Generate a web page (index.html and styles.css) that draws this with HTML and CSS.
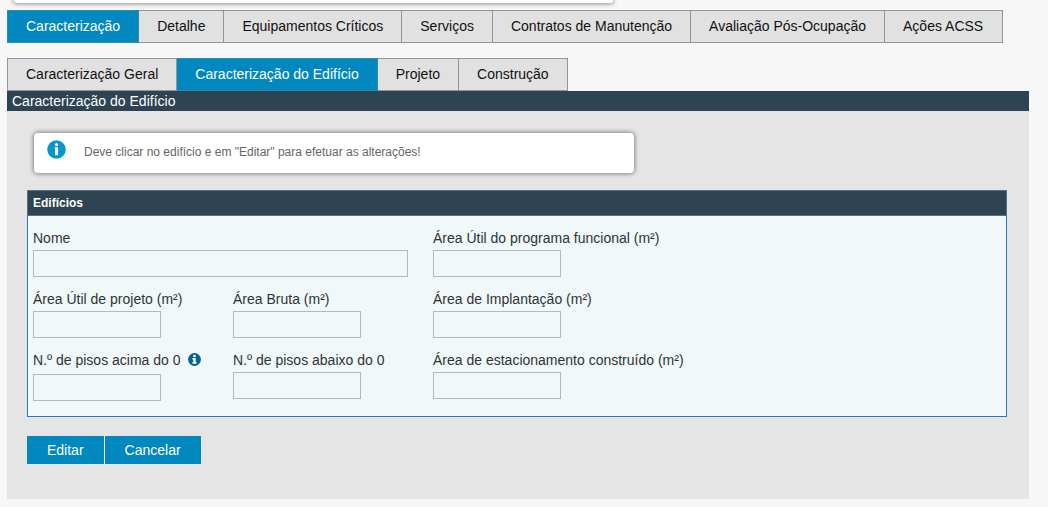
FILE: index.html
```html
<!DOCTYPE html>
<html lang="pt">
<head>
<meta charset="utf-8">
<title>Caracterização do Edifício</title>
<link rel="stylesheet" href="styles.css">
</head>
<body>
<div class="page">
  <div class="notice notice-top"></div>
  <nav class="tabs tabs-main">
    <a class="tab active">Caracterização</a><a class="tab">Detalhe</a><a class="tab">Equipamentos Críticos</a><a class="tab">Serviços</a><a class="tab">Contratos de Manutenção</a><a class="tab">Avaliação Pós-Ocupação</a><a class="tab">Ações ACSS</a>
  </nav>
  <nav class="tabs tabs-sub">
    <a class="tab">Caracterização Geral</a><a class="tab active">Caracterização do Edifício</a><a class="tab">Projeto</a><a class="tab">Construção</a>
  </nav>
  <main class="panel">
    <h1 class="panel-title">Caracterização do Edifício</h1>
    <div class="notice">
      <svg class="notice-icon" viewBox="0 0 19 19"><circle cx="9.5" cy="9.5" r="9.3" fill="#0596cb"/><circle cx="9.5" cy="4.6" r="1.6" fill="#fff"/><path d="M7.7 7.3h3.4v8H8V8.6h-.3z" fill="#fff"/></svg>
      <span>Deve clicar no edifício e em "Editar" para efetuar as alterações!</span>
    </div>
    <section class="card">
      <h2 class="card-title">Edifícios</h2>
      <div class="fields">
        <div class="field wide"><label>Nome</label><input type="text"></div>
        <div class="field"><label>Área Útil do programa funcional (m²)</label><input type="text"></div>
        <div class="field"><label>Área Útil de projeto (m²)</label><input type="text"></div>
        <div class="field"><label>Área Bruta (m²)</label><input type="text"></div>
        <div class="field"><label>Área de Implantação (m²)</label><input type="text"></div>
        <div class="field has-help"><label>N.º de pisos acima do 0 <svg class="help" viewBox="0 0 13 13"><circle cx="6.5" cy="6.5" r="6.4" fill="#04638f"/><path d="M5.3 2h2.4v2H5.3zM4.4 5h3.3v4.3h.9v1.5H4.4V9.3h.9V6.5h-.9z" fill="#fff"/></svg></label><input type="text"></div>
        <div class="field"><label>N.º de pisos abaixo do 0</label><input type="text"></div>
        <div class="field"><label>Área de estacionamento construído (m²)</label><input type="text"></div>
      </div>
    </section>
    <div class="actions"><button class="btn">Editar</button><button class="btn">Cancelar</button></div>
  </main>
</div>
</body>
</html>
```
FILE: styles.css
```css
* { box-sizing: border-box; }
body {
  margin: 0;
  height: 507px;
  overflow: hidden;
  background: #f7f7f7;
  font: 14px/20px "Liberation Sans", Arial, sans-serif;
  color: #333;
}
.page { width: 1022px; margin-left: 7px; }
.notice {
  display: flex;
  width: 600px;
  height: 40px;
  margin: 22px 0 0 27px;
  padding: 7px 13px;
  background: #fff;
  border-radius: 4px;
  box-shadow: 0 0 4px 1px rgba(0, 0, 0, .42);
  font-size: 12px;
  line-height: 24px;
  color: #666;
}
.notice-top { height: 3px; width: 599px; margin: 0 0 0 7px; padding: 0; border-radius: 0 0 4px 4px; }
.notice-icon { width: 19px; height: 19px; margin-right: 18px; }
.tabs { display: flex; }
.tabs-main { margin-top: 7px; }
.tabs-sub { margin-top: 15px; }
.tab {
  height: 33px;
  padding: 6px 18px 0;
  border: 1px solid #959595;
  background: #e1e1e1;
  color: #111;
  line-height: 19px;
  white-space: nowrap;
}
.tab + .tab { border-left: 0; }
.tabs-main .tab:last-child { padding-right: 19px; }
.tab.active { background: #0088bf; border-color: #2c8bb4; color: #fff; }
.panel { height: 408px; background: #e5e5e5; }
.panel-title {
  height: 20px;
  margin: 0;
  padding-left: 5px;
  background: #2f4453;
  color: #fff;
  font-size: 14px;
  font-weight: 400;
  line-height: 20px;
}
.card {
  width: 980px;
  height: 227px;
  margin: 17px 0 0 20px;
  border: 1px solid #2679c4;
  background: #f0f8fa;
}
.card-title {
  height: 26px;
  margin: -1px -1px 0;
  padding-left: 5px;
  border: 1px solid #547386;
  background: #2f4453;
  color: #fff;
  font-size: 12px;
  line-height: 24px;
}
.fields { display: grid; grid-template-columns: 200px 200px 1fr; grid-auto-rows: 61px; padding: 12px 5px 0; }
.field { display: flex; flex-direction: column; align-items: flex-start; }
.wide { grid-column: span 2; }
.field label { height: 22px; line-height: 20px; white-space: nowrap; }
.field input {
  width: 128px;
  height: 27px;
  margin: 0;
  border: 1px solid #b2babe;
  background: transparent;
}
.wide input { width: 375px; }
.has-help label { height: 24px; }
.help { width: 13px; height: 13px; margin-left: 4px; vertical-align: -1px; }
.actions { display: flex; gap: 1px; width: max-content; margin: 19px 0 0 20px; background: #f4f4f4; }
.btn {
  height: 28px;
  padding: 0 20px;
  border: 0;
  background: #0088bf;
  color: #fff;
  font: 14px/28px "Liberation Sans", Arial, sans-serif;
}
```
